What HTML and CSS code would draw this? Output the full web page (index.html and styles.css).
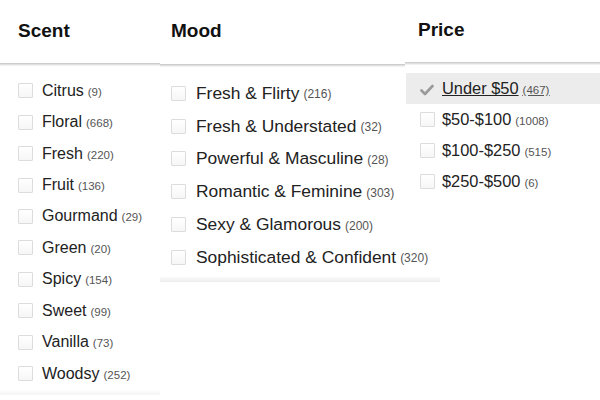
FILE: index.html
```html
<!DOCTYPE html>
<html>
<head>
<meta charset="utf-8">
<link rel="stylesheet" href="styles.css">
</head>
<body>
<div class="filters">
  <section class="col col-scent">
    <h2 class="col-title">Scent</h2>
    <ul class="panel">
      <li class="opt"><span class="box"></span><span class="label">Citrus</span><span class="count">(9)</span></li>
      <li class="opt"><span class="box"></span><span class="label">Floral</span><span class="count">(668)</span></li>
      <li class="opt"><span class="box"></span><span class="label">Fresh</span><span class="count">(220)</span></li>
      <li class="opt"><span class="box"></span><span class="label">Fruit</span><span class="count">(136)</span></li>
      <li class="opt"><span class="box"></span><span class="label">Gourmand</span><span class="count">(29)</span></li>
      <li class="opt"><span class="box"></span><span class="label">Green</span><span class="count">(20)</span></li>
      <li class="opt"><span class="box"></span><span class="label">Spicy</span><span class="count">(154)</span></li>
      <li class="opt"><span class="box"></span><span class="label">Sweet</span><span class="count">(99)</span></li>
      <li class="opt"><span class="box"></span><span class="label">Vanilla</span><span class="count">(73)</span></li>
      <li class="opt"><span class="box"></span><span class="label">Woodsy</span><span class="count">(252)</span></li>
    </ul>
  </section>
  <section class="col col-mood">
    <h2 class="col-title">Mood</h2>
    <ul class="panel">
      <li class="opt"><span class="box"></span><span class="label">Fresh &amp; Flirty</span><span class="count">(216)</span></li>
      <li class="opt"><span class="box"></span><span class="label">Fresh &amp; Understated</span><span class="count">(32)</span></li>
      <li class="opt"><span class="box"></span><span class="label">Powerful &amp; Masculine</span><span class="count">(28)</span></li>
      <li class="opt"><span class="box"></span><span class="label">Romantic &amp; Feminine</span><span class="count">(303)</span></li>
      <li class="opt"><span class="box"></span><span class="label">Sexy &amp; Glamorous</span><span class="count">(200)</span></li>
      <li class="opt"><span class="box"></span><span class="label">Sophisticated &amp; Confident</span><span class="count">(320)</span></li>
    </ul>
  </section>
  <section class="col col-price">
    <h2 class="col-title">Price</h2>
    <ul class="panel">
      <li class="opt opt-selected"><span class="tick"><svg width="14" height="12" viewBox="0 0 14 12"><polyline points="1.5,6.5 5,10 12.5,2" fill="none" stroke="#9a9a9a" stroke-width="2.6" stroke-linecap="round" stroke-linejoin="round"/></svg></span><span class="label">Under $50<span class="count">(467)</span></span></li>
      <li class="opt"><span class="box"></span><span class="label">$50-$100</span><span class="count">(1008)</span></li>
      <li class="opt"><span class="box"></span><span class="label">$100-$250</span><span class="count">(515)</span></li>
      <li class="opt"><span class="box"></span><span class="label">$250-$500</span><span class="count">(6)</span></li>
    </ul>
  </section>
</div>
</body>
</html>
```

FILE: styles.css
```css
html, body {
  margin: 0;
  padding: 0;
  background: #fff;
}
body {
  font-family: "Liberation Sans", Arial, Helvetica, sans-serif;
  color: #222;
  width: 600px;
  height: 400px;
  overflow: hidden;
}
.filters {
  display: flex;
  align-items: flex-start;
}
.col {
  position: relative;
  flex: none;
}
.col-scent { width: 160px; }
.col-mood { width: 280px; }
.col-price {
  width: 195px;
  margin-left: -35px;
  z-index: 2;
}
.col-title {
  margin: 0;
  height: 63px;
  box-sizing: border-box;
  padding-top: 20px;
  font-size: 19px;
  line-height: 22px;
  font-weight: bold;
  color: #111;
}
.col-scent .col-title { padding-left: 18px; }
.col-mood .col-title { padding-left: 11px; }
.col-price .col-title { padding-left: 13px; padding-top: 19px; height: 62px; }

.panel {
  list-style: none;
  margin: 0;
  background: #fff;
  position: relative;
}
.panel::before {
  content: "";
  position: absolute;
  left: 0;
  right: 0;
  top: 0;
  height: 3px;
  background: linear-gradient(#c4c4c4, #e6e6e6 60%, #fafafa);
}
.col-scent .panel {
  padding: 12px 0 6px 18px;
}
.col-scent .panel::after,
.col-mood .panel::after {
  content: "";
  position: absolute;
  left: 0;
  right: 0;
  bottom: 0;
  height: 5px;
  background: linear-gradient(#fbfbfb, #ececec);
}
.col-scent .panel::after {
  background: linear-gradient(#fefefe, #f4f4f4);
}
.col-mood .panel {
  padding: 13px 0 8px 11px;
  margin-top: 1px;
}
.col-price .panel {
  padding: 11px 0 20px 1px;
}

.opt {
  display: flex;
  align-items: center;
  white-space: nowrap;
}
.col-scent .opt { height: 31.45px; font-size: 16px; }
.col-mood .opt { height: 32.8px; font-size: 17.4px; }
.col-price .opt { height: 31px; font-size: 16.4px; padding-left: 14px; }

.box {
  flex: none;
  width: 13px;
  height: 13px;
  border: 1px solid #dcdcdc;
  background: linear-gradient(#fff, #f6f6f6);
  margin-right: 9px;
  border-radius: 1px;
}
.col-mood .box { margin-right: 10px; }
.col-price .box { margin-right: 7px; }
.label {
  color: #222;
}
.count {
  font-size: 11.5px;
  color: #555;
  margin-left: 4px;
  position: relative;
  top: 1px;
}
.col-mood .count { font-size: 12px; }

.opt-selected {
  background: #ececec;
  margin-left: 0;
}
.tick {
  flex: none;
  width: 15px;
  height: 12px;
  margin-right: 7px;
  display: flex;
  align-items: center;
  position: relative;
  top: 1px;
}
.opt-selected .label {
  text-decoration: underline;
  color: #222;
}
.opt-selected .count {
  text-decoration: underline;
  top: 0;
}
```
